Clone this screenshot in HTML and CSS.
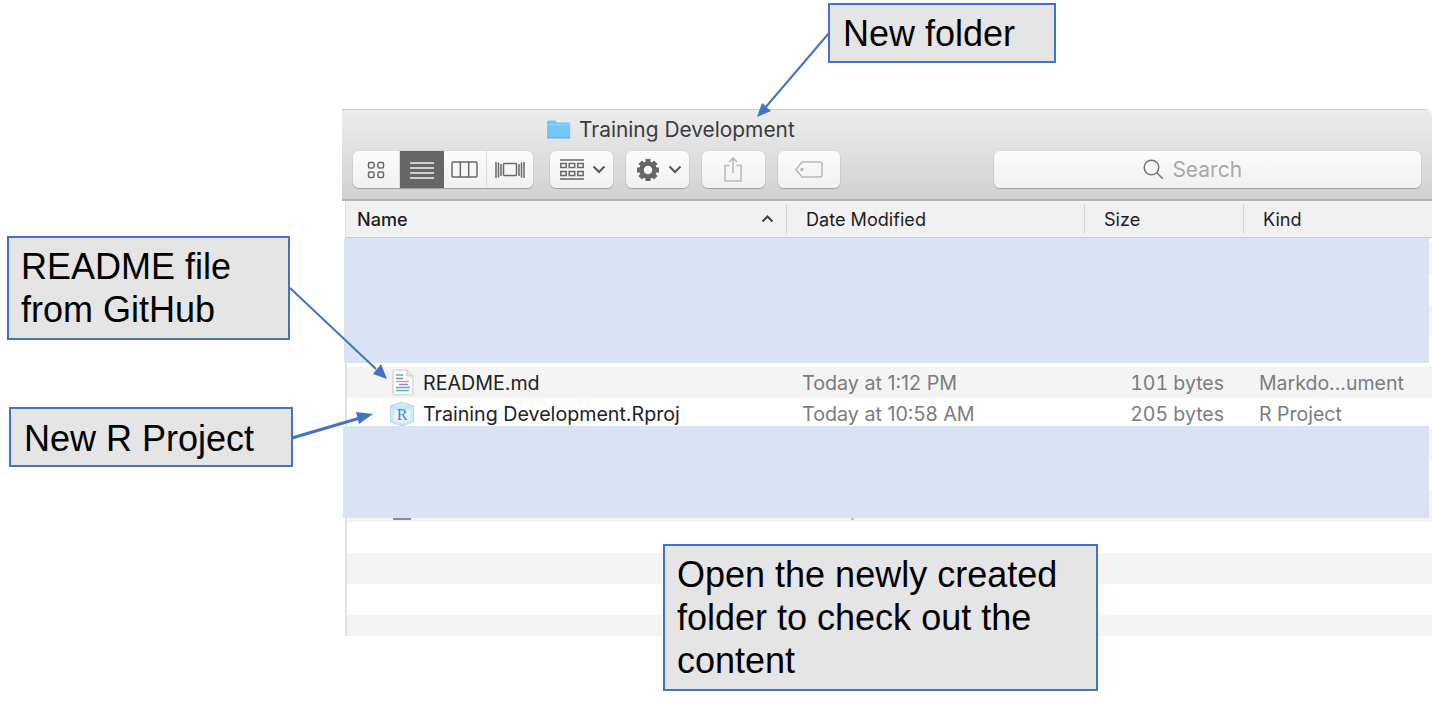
FILE: index.html
```html
<!DOCTYPE html>
<html lang="en">
<head>
<meta charset="utf-8">
<title>Training Development</title>
<link rel="stylesheet" href="styles.css">
</head>
<body>
<main class="stage">
  <section class="window">
    <header class="toolbar">
      <div class="title">
        <svg class="folder" viewBox="0 0 25 20"><path d="M1 3.5C1 2.2 1.8 1.500 3 1.500h5.500c1 0 1.500.4 2 1.200l.6.8H23c.7 0 1.200.5 1.200 1.200V18c0 .8-.5 1.300-1.200 1.300H2.200C1.500 19.300 1 18.800 1 18z" fill="#6fc8f7"/><path d="M1 5.200h23.200v1H1z" fill="#9adcfb"/><path d="M1 18.500h23.200v.8H1z" fill="#4ea6d8"/></svg>
        <span>Training Development</span>
      </div>
      <div class="controls">
        <div class="segmented">
          <div class="seg seg-a"><svg width="18" height="18" viewBox="0 0 18 18" class="ic"><rect x="1.500" y="1.500" width="5.500" height="5.500" rx="1.300"/><rect x="11" y="1.500" width="5.500" height="5.500" rx="1.300"/><rect x="1.500" y="11" width="5.500" height="5.500" rx="1.300"/><rect x="11" y="11" width="5.500" height="5.500" rx="1.300"/></svg></div>
          <div class="seg seg-b active"><svg width="24" height="18" viewBox="0 0 24 18"><path d="M0 2h24M0 7h24M0 12h24M0 17h24" stroke="#f4f4f4" stroke-width="1.600" fill="none"/></svg></div>
          <div class="seg seg-c"><svg width="27" height="17" viewBox="0 0 27 17" class="ic"><rect x="1" y="1" width="25" height="15" rx="1"/><path d="M9.300 1v15M17.700 1v15"/></svg></div>
          <div class="seg seg-d"><svg width="30" height="18" viewBox="0 0 30 18" class="ic"><rect x="8.500" y="2.500" width="13" height="12" rx="1"/><path d="M1 1v16M3.500 1.500v15M6 3v12M24 3v12M26.500 1.500v15M29 1v16"/></svg></div>
        </div>
        <div class="btn btn-group">
          <svg width="24" height="21" viewBox="0 0 24 21" class="ic"><path d="M0 1h24M0 20h24"/><rect x=".8" y="4.500" width="5.500" height="4"/><rect x="9.200" y="4.500" width="5.500" height="4"/><rect x="17.700" y="4.500" width="5.500" height="4"/><rect x=".8" y="12.500" width="5.500" height="4"/><rect x="9.200" y="12.500" width="5.500" height="4"/><rect x="17.700" y="12.500" width="5.500" height="4"/></svg>
          <svg width="14" height="9" viewBox="0 0 14 9" class="chev"><path d="M1.500 1.500 7 7l5.500-5.500"/></svg>
        </div>
        <div class="btn btn-group">
          <svg width="24" height="24" viewBox="0 0 24 24" class="gear"><circle cx="12" cy="12" r="6.500" fill="none" stroke="#666" stroke-width="4.500"/><g fill="#666"><rect x="9.500" y="1" width="5" height="5"/><rect x="9.500" y="18" width="5" height="5"/><rect x="1" y="9.500" width="5" height="5"/><rect x="18" y="9.500" width="5" height="5"/><rect x="9.500" y="1" width="5" height="5" transform="rotate(45 12 12)"/><rect x="9.500" y="18" width="5" height="5" transform="rotate(45 12 12)"/><rect x="1" y="9.500" width="5" height="5" transform="rotate(45 12 12)"/><rect x="18" y="9.500" width="5" height="5" transform="rotate(45 12 12)"/></g></svg>
          <svg width="14" height="9" viewBox="0 0 14 9" class="chev"><path d="M1.500 1.500 7 7l5.500-5.500"/></svg>
        </div>
        <div class="btn"><svg width="18" height="25" viewBox="0 0 18 25" class="ic-dim"><path d="M5.500 8.500H1v15.500h16V8.500h-4.500M9 16V1M5 5l4-4 4 4"/></svg></div>
        <div class="btn"><svg width="28" height="17" viewBox="0 0 28 17" class="ic-dim"><path d="M7 1h18c1.200 0 2 .8 2 2v11c0 1.200-.8 2-2 2H7L1 8.500z"/><circle cx="7" cy="8.500" r="1"/></svg></div>
        <div class="search">
          <svg width="21" height="21" viewBox="0 0 21 21" class="lens"><circle cx="8.500" cy="8.500" r="7.300"/><path d="m13.800 13.800 6 6"/></svg>
          <span>Search</span>
        </div>
      </div>
    </header>
    <div class="columns">
      <div class="col col-name"><span>Name</span><svg width="13" height="8" viewBox="0 0 13 8" class="sort"><path d="M1.500 6.500 6.500 1.500l5 5"/></svg></div>
      <div class="col col-date">Date Modified</div>
      <div class="col col-size">Size</div>
      <div class="col col-kind">Kind</div>
    </div>
    <div class="list">
      <div class="row row-top"></div>
      <div class="row"></div>
      <div class="row"></div>
      <div class="row"></div>
      <div class="row"></div>
      <div class="row">
        <div class="cell-name">
          <svg class="file" width="23" height="27" viewBox="0 0 23 27"><path d="M2.500 1H15l6 6v17.500c0 .9-.6 1.500-1.500 1.500h-17c-.9 0-1.500-.6-1.500-1.500v-22C1 1.600 1.600 1 2.500 1z" fill="#fbfbfb" stroke="#c9c9c9"/><path d="M15 1v6h6" fill="#e9e9e9" stroke="#c9c9c9"/><path d="M4 6h7" stroke="#5aa9a6" stroke-width="1.400"/><path d="M4 9.500h7" stroke="#6d8cc4" stroke-width="1.400"/><path d="M4 12.500h13" stroke="#e78a96" stroke-width="1.400"/><path d="M7 15.500h9" stroke="#a17fd6" stroke-width="1.400"/><path d="M4 18.500h14" stroke="#4eb4b1" stroke-width="1.400"/><path d="M4 21.500h13" stroke="#4eb4b1" stroke-width="1.400"/></svg>
          <span>README.md</span>
        </div>
        <div class="cell-date">Today at 1:12 PM</div>
        <div class="cell-size">101 bytes</div>
        <div class="cell-kind">Markdo...ument</div>
      </div>
      <div class="row">
        <div class="cell-name">
          <svg class="cube" width="26" height="26" viewBox="0 0 26 26"><path d="M13 1 24.500 5v16L13 25 1.500 21V5z" fill="#cfe7f6" stroke="#b8d8ec"/><path d="M1.500 5 13 9l11.500-4M13 9v16" fill="none" stroke="#bcdcef"/><path d="M5 8.500 13 11l8-2.500V19l-8 3-8-3z" fill="#e8f4fb"/><text x="13" y="19" class="cube-r">R</text></svg>
          <span>Training Development.Rproj</span>
        </div>
        <div class="cell-date">Today at 10:58 AM</div>
        <div class="cell-size">205 bytes</div>
        <div class="cell-kind">R Project</div>
      </div>
      <div class="row"></div>
      <div class="row"></div>
      <div class="row row-remnant"><i class="remnant-icon"></i><i class="remnant-tick"></i></div>
      <div class="row"></div>
      <div class="row"></div>
      <div class="row"></div>
      <div class="row"></div>
    </div>
  </section>

  <div class="cover cover-one"></div>
  <div class="cover cover-two"></div>

  <svg class="arrows" width="1432" height="702" viewBox="0 0 1432 702">
    <path d="M829 33 765 108" />
    <path class="head" d="M757 117 762 103 771 111z"/>
    <path d="M290 288 376 369" />
    <path class="head" d="M387 379 373 374 381 364z"/>
    <path class="thick" d="M292 438 360 418" />
    <path class="head" d="M373 414 359 424 356 412z"/>
  </svg>

  <div class="note note-folder">New folder</div>
  <div class="note note-readme">README file<br>from GitHub</div>
  <div class="note note-rproj">New R Project</div>
  <div class="note note-open">Open the newly created folder to check out the content</div>
</main>
</body>
</html>
```

FILE: styles.css
```css
* { box-sizing: border-box; }
html, body { margin: 0; padding: 0; background: #fff; }
.stage {
  position: relative;
  width: 1432px;
  height: 702px;
  overflow: hidden;
  padding: 109px 0 0 342px;
  font-family: Inter, "Liberation Sans", sans-serif;
}
.window {
  width: 1090px;
  height: 527px;
  overflow: hidden;
  background: #fff;
  border-top-right-radius: 7px;
  display: flex;
  flex-direction: column;
}
.toolbar {
  height: 92px;
  flex: none;
  border-top: 1px solid #cfcfcf;
  border-bottom: 2px solid #b5b5b5;
  background: linear-gradient(#ececec, #d2d2d2);
  padding: 0 11px;
  display: flex;
  flex-direction: column;
}
.title {
  height: 41px;
  padding: 8px 0 0 193px;
  display: flex;
  align-items: flex-start;
  gap: 8px;
  color: #3c3c3c;
  font-size: 20.9px;
  line-height: 24px;
}
.folder { width: 25px; height: 20px; flex: none; margin-top: 1px; }
.controls { display: flex; align-items: flex-start; gap: 13px; }
.segmented, .btn, .search {
  height: 37px;
  border-radius: 6px;
  background: linear-gradient(#fcfcfc, #f1f1f1);
  box-shadow: 0 1px 1px rgba(0, 0, 0, .22), 0 0 0 .5px rgba(0, 0, 0, .07);
}
.segmented { display: flex; width: 180px; margin-right: 4px; overflow: hidden; }
.seg { display: flex; align-items: center; justify-content: center; border-right: 1px solid #dcdcdc; }
.seg-a { width: 47px; }
.seg-b { width: 44px; }
.seg-c { width: 43px; }
.seg-d { width: 46px; border-right: 0; }
.active { background: #666; border-right: 0; }
.ic { fill: none; stroke: #686868; stroke-width: 1.500; }
.btn { width: 63px; display: flex; align-items: center; justify-content: center; }
.btn-group { gap: 8px; padding-left: 4px; }
.gear { width: 24px; height: 24px; }
.chev { fill: none; stroke: #555; stroke-width: 2; }
.ic-dim { fill: none; stroke: #b9b9b9; stroke-width: 1.500; }
.search {
  width: 427px;
  margin-left: 141px;
  padding-right: 30px;
  display: flex;
  align-items: center;
  justify-content: center;
  gap: 8px;
  color: #a9a9a9;
  font-size: 21px;
}
.lens { fill: none; stroke: #747474; stroke-width: 1.500; }
.columns {
  height: 37px;
  flex: none;
  margin-left: 3px;
  background: #f1f1f1;
  border-left: 1px solid #dedede;
  border-bottom: 1px solid #c9c9d2;
  display: grid;
  grid-template-columns: 441px 298px 159px 1fr;
  color: #1e1e1e;
  font-size: 18.100px;
  line-height: 36px;
}
.col { position: relative; padding-left: 19px; }
.col::after {
  content: "";
  position: absolute;
  right: 0;
  top: 3px;
  bottom: 3px;
  width: 1px;
  background: #d6d6d6;
}
.col-kind::after { display: none; }
.col-name { padding-left: 11px; font-weight: 500; display: flex; justify-content: space-between; align-items: center; padding-right: 13px; }
.sort { fill: none; stroke: #444; stroke-width: 2; }
.list {
  flex: 1;
  margin-left: 3px;
  border-left: 2px solid #e3e3e3;
  background: #fff;
}
.row {
  height: 31px;
  display: grid;
  grid-template-columns: 455px 327px 101px 1fr;
  align-items: center;
  font-size: 19.500px;
  color: #7c7c7c;
}
.row:nth-child(even) { background: #f4f4f4; }
.row-top { height: 5px; }
.cell-name {
  display: flex;
  align-items: center;
  color: #232323;
  height: 31px;
  padding-left: 42px;
  gap: 9px;
  white-space: nowrap;
  font-size: 19.650px;
}
.file { flex: none; margin-left: 3px; margin-right: -1px; }
.cube { flex: none; margin-right: -1px; }
.cube-r { font-family: "Liberation Serif", serif; font-size: 16px; fill: #2e8fd8; text-anchor: middle; }
.cell-date { white-space: nowrap; font-size: 19.700px; }
.cell-size { text-align: right; white-space: nowrap; margin-right: 6px; font-variant-numeric: tabular-nums; }
.cell-kind { padding-left: 29px; white-space: nowrap; }
.row-remnant { position: relative; }
.remnant-icon { position: absolute; left: 46px; top: 27px; width: 18px; height: 2px; background: #8d86ad; }
.remnant-tick { position: absolute; left: 504px; top: 27px; width: 3px; height: 2px; background: #c6c6c6; }
.cover { position: absolute; background: #dae3f3; }
.cover-one { left: 344px; top: 238px; width: 1085px; height: 125px; }
.cover-two { left: 343px; top: 426px; width: 1086px; height: 92px; }
.arrows { position: absolute; left: 0; top: 0; }
.arrows path { fill: none; stroke: #4472c4; stroke-width: 2; }
.arrows .thick { stroke-width: 3; }
.arrows .head { fill: #4472c4; stroke: none; }
.note {
  position: absolute;
  background: #e5e5e5;
  border: 2px solid #4472c4;
  color: #000;
  font-family: "Liberation Sans", Arial, sans-serif;
  font-size: 36px;
  line-height: 43px;
}
.note-folder { left: 828px; top: 3px; width: 228px; height: 60px; padding: 7px 0 0 13px; }
.note-readme { left: 7px; top: 236px; width: 283px; height: 104px; padding: 7px 0 0 12px; }
.note-rproj { left: 9px; top: 407px; width: 284px; height: 60px; padding: 8px 0 0 13px; }
.note-open { left: 663px; top: 544px; width: 435px; height: 147px; padding: 7px 12px 0 12px; }
```
